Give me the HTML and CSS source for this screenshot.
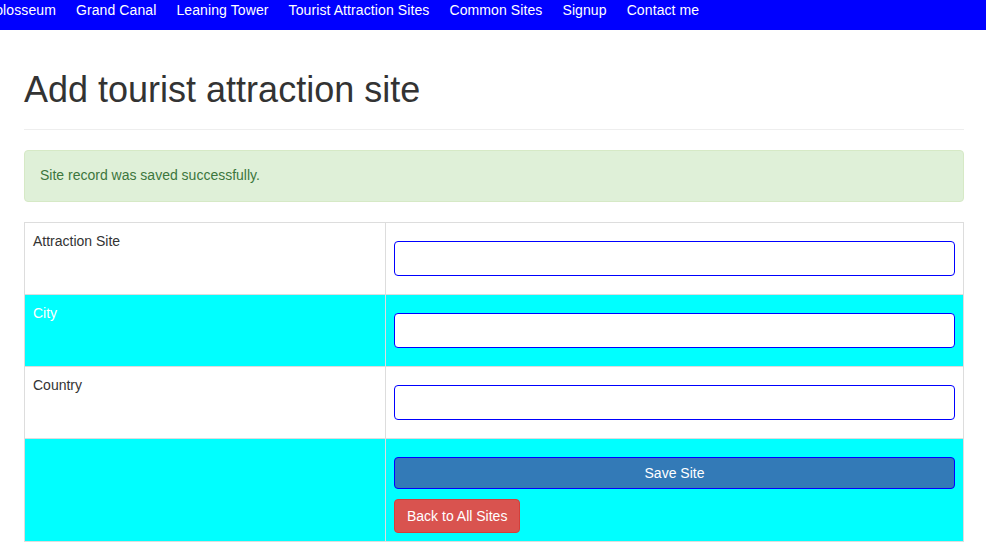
FILE: index.html
```html
<!DOCTYPE html>
<html lang="en">
<head>
  <meta charset="UTF-8">
  <title>Add tourist attraction site</title>
  <link rel="stylesheet" href="styles.css">
</head>
<body>
  <nav class="barra">
    <ul class="menu">
      <li><a href="#">Colosseum</a></li>
      <li><a href="#">Grand Canal</a></li>
      <li><a href="#">Leaning Tower</a></li>
      <li><a href="#">Tourist Attraction Sites</a></li>
      <li><a href="#">Common Sites</a></li>
      <li><a href="#">Signup</a></li>
      <li><a href="#">Contact me</a></li>
    </ul>
  </nav>

  <div class="contenido">
    <div class="page-header">
      <h1>Add tourist attraction site</h1>
    </div>

    <div class="alert-success">Site record was saved successfully.</div>

    <form id="formSite">
      <table class="tabla">
        <tr>
          <td class="etiqueta">Attraction Site</td>
          <td><input type="text" class="campo" name="site"></td>
        </tr>
        <tr class="resaltado">
          <td class="etiqueta">City</td>
          <td><input type="text" class="campo" name="city"></td>
        </tr>
        <tr>
          <td class="etiqueta">Country</td>
          <td><input type="text" class="campo" name="country"></td>
        </tr>
        <tr class="resaltado">
          <td></td>
          <td>
            <button type="submit" class="btn-guardar">Save Site</button>
            <a class="btn-volver" href="#">Back to All Sites</a>
          </td>
        </tr>
      </table>
    </form>
  </div>
</body>
</html>
```

FILE: styles.css
```css
body {
  margin: 0;
  padding: 0;
  font-family: "Liberation Sans", Arial, sans-serif;
  font-size: 14px;
  line-height: 1.42857;
  color: #333;
  background-color: #fff;
}

.barra {
  background-color: #0000ff;
  height: 30px;
  overflow: hidden;
}

.menu {
  list-style: none;
  margin: 0 0 0 -25px;
  padding: 0;
  display: flex;
}

.menu a {
  display: block;
  padding: 0 10px;
  line-height: 20px;
  color: #fff;
  text-decoration: none;
  white-space: nowrap;
  letter-spacing: 0.1px;
}

.contenido {
  padding: 0 22px 0 24px;
}

.page-header {
  margin: 40px 0 20px;
  padding-bottom: 9px;
  border-bottom: 1px solid #eee;
}

h1 {
  margin: 0 0 10px;
  font-size: 36px;
  font-weight: normal;
  line-height: 1.1;
  color: #333;
}

.alert-success {
  padding: 15px;
  margin-bottom: 20px;
  border: 1px solid #d6e9c6;
  border-radius: 4px;
  background-color: #dff0d8;
  color: #3c763d;
}

.tabla {
  width: 100%;
  border-collapse: collapse;
  border: 1px solid #ddd;
}

.tabla td {
  padding: 8px;
  border: 1px solid #ddd;
  vertical-align: top;
}

.tabla .etiqueta {
  width: 344px;
  padding-top: 9px;
}

.resaltado {
  background-color: #00ffff;
}

.resaltado .etiqueta {
  color: #fff;
}

.campo {
  display: block;
  box-sizing: border-box;
  width: 100%;
  height: 35px;
  margin: 10px 0;
  padding: 6px 12px;
  border: 1px solid #0000ff;
  border-radius: 4px;
  background-color: #fff;
  font-family: inherit;
  font-size: 14px;
}

.btn-guardar {
  display: block;
  box-sizing: border-box;
  width: 100%;
  height: 32px;
  margin: 10px 0;
  border: 1px solid #0000ff;
  border-radius: 4px;
  background-color: #337ab7;
  color: #fff;
  font-family: inherit;
  font-size: 14px;
  cursor: pointer;
}

.btn-volver {
  display: inline-block;
  padding: 6px 12px;
  border: 1px solid #d43f3a;
  border-radius: 4px;
  background-color: #d9534f;
  color: #fff;
  text-decoration: none;
  line-height: 20px;
}
```
